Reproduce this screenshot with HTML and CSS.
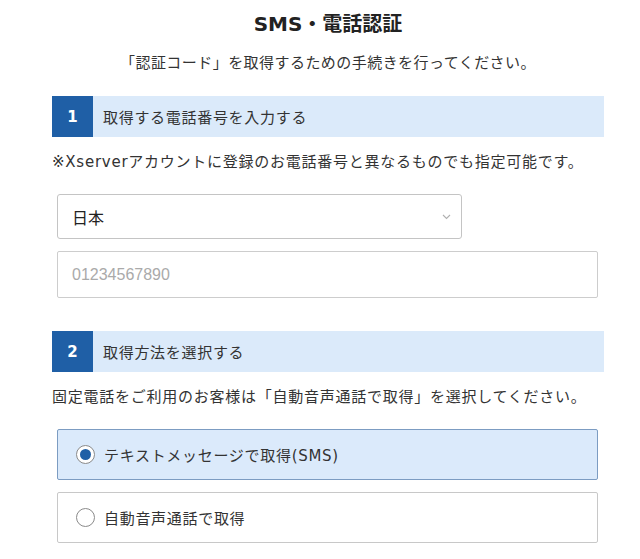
FILE: index.html
```html
<!DOCTYPE html>
<html lang="ja">
<head>
<meta charset="utf-8">
<title>SMS・電話認証</title>
<link rel="stylesheet" href="styles.css">
</head>
<body>
<main class="page">
  <h1 class="title">SMS・電話認証</h1>
  <p class="lead">「認証コード」を取得するための手続きを行ってください。</p>

  <section class="step">
    <div class="step-head"><span class="step-num">1</span><span class="step-label">取得する電話番号を入力する</span></div>
    <p class="note">※Xserverアカウントに登録のお電話番号と異なるものでも指定可能です。</p>
    <div class="fields">
      <div class="select">
        <span class="select-value">日本</span>
        <svg class="chev" width="9" height="6" viewBox="0 0 9 6"><path d="M1 1 L4.5 4.5 L8 1" fill="none" stroke="#b0b0b0" stroke-width="1.1"/></svg>
      </div>
      <div class="input"><span class="placeholder">01234567890</span></div>
    </div>
  </section>

  <section class="step step-2">
    <div class="step-head"><span class="step-num">2</span><span class="step-label">取得方法を選択する</span></div>
    <p class="note">固定電話をご利用のお客様は「自動音声通話で取得」を選択してください。</p>
    <div class="options">
      <div class="option option-on"><span class="radio radio-on"></span><span class="option-label">テキストメッセージで取得(SMS)</span></div>
      <div class="option"><span class="radio"></span><span class="option-label">自動音声通話で取得</span></div>
    </div>
  </section>
</main>
</body>
</html>
```

FILE: styles.css
```css
* { box-sizing: border-box; }
html, body { margin: 0; padding: 0; background: #fff; }
body {
  font-family: "DejaVu Sans", "Noto Sans CJK JP", sans-serif;
  color: #333;
}
.page {
  width: 552px;
  margin-left: 52px;
  padding-top: 10px;
}
.title {
  margin: 0;
  text-align: center;
  font-size: 20px;
  line-height: 28px;
  font-weight: bold;
  color: #222;
}
.lead {
  margin: 13px 0 0;
  text-align: center;
  font-size: 15px;
  line-height: 22px;
  letter-spacing: 0.45px;
  font-family: "Noto Sans CJK JP", sans-serif;
}
.step { margin-top: 23px; }
.step-2 { margin-top: 33px; }
.step-head {
  display: flex;
  align-items: center;
  height: 41px;
  background: #dbeafa;
}
.step-num {
  width: 41px;
  height: 41px;
  display: flex;
  align-items: center;
  justify-content: center;
  background: #1f5fa6;
  color: #fff;
  font-weight: bold;
  font-size: 15px;
}
.step-label {
  margin-left: 10px;
  font-size: 15px;
  letter-spacing: 0.7px;
  font-family: "Noto Sans CJK JP", sans-serif;
}
.note {
  margin: 14px 0 0;
  font-size: 15px;
  line-height: 22px;
  letter-spacing: 0.75px;
}
.fields {
  margin: 21px 0 0 5px;
  display: flex;
  flex-direction: column;
  gap: 12px;
}
.select {
  width: 405px;
  height: 45px;
  border: 1px solid #c4c4c4;
  border-radius: 3px;
  display: flex;
  align-items: center;
  justify-content: space-between;
  padding: 0 10px 0 14px;
}
.select-value {
  font-family: "Noto Sans CJK JP", sans-serif;
  font-size: 16px;
  color: #222;
}
.chev { margin-top: 1px; }
.input {
  width: 541px;
  height: 47px;
  border: 1px solid #cdcdcd;
  border-radius: 2px;
  display: flex;
  align-items: center;
  padding-left: 14px;
}
.placeholder {
  font-family: "Liberation Sans", sans-serif;
  font-size: 16px;
  color: #aaa;
}
.options {
  margin: 21px 0 0 5px;
  display: flex;
  flex-direction: column;
  gap: 12px;
}
.option {
  width: 541px;
  height: 51px;
  border: 1px solid #c8c8c8;
  border-radius: 2px;
  display: flex;
  align-items: center;
  padding-left: 18px;
  background: #fff;
}
.option-on {
  background: #dbeafb;
  border-color: #7c9cc2;
}
.radio {
  width: 19px;
  height: 19px;
  border: 1px solid #8a8a8a;
  border-radius: 50%;
  background: #fff;
  display: flex;
  align-items: center;
  justify-content: center;
  flex: none;
}
.radio-on::after {
  content: "";
  width: 11px;
  height: 11px;
  border-radius: 50%;
  background: #1f5fa6;
}
.option-label {
  margin-left: 9px;
  font-size: 15px;
  letter-spacing: 0.7px;
}
```
